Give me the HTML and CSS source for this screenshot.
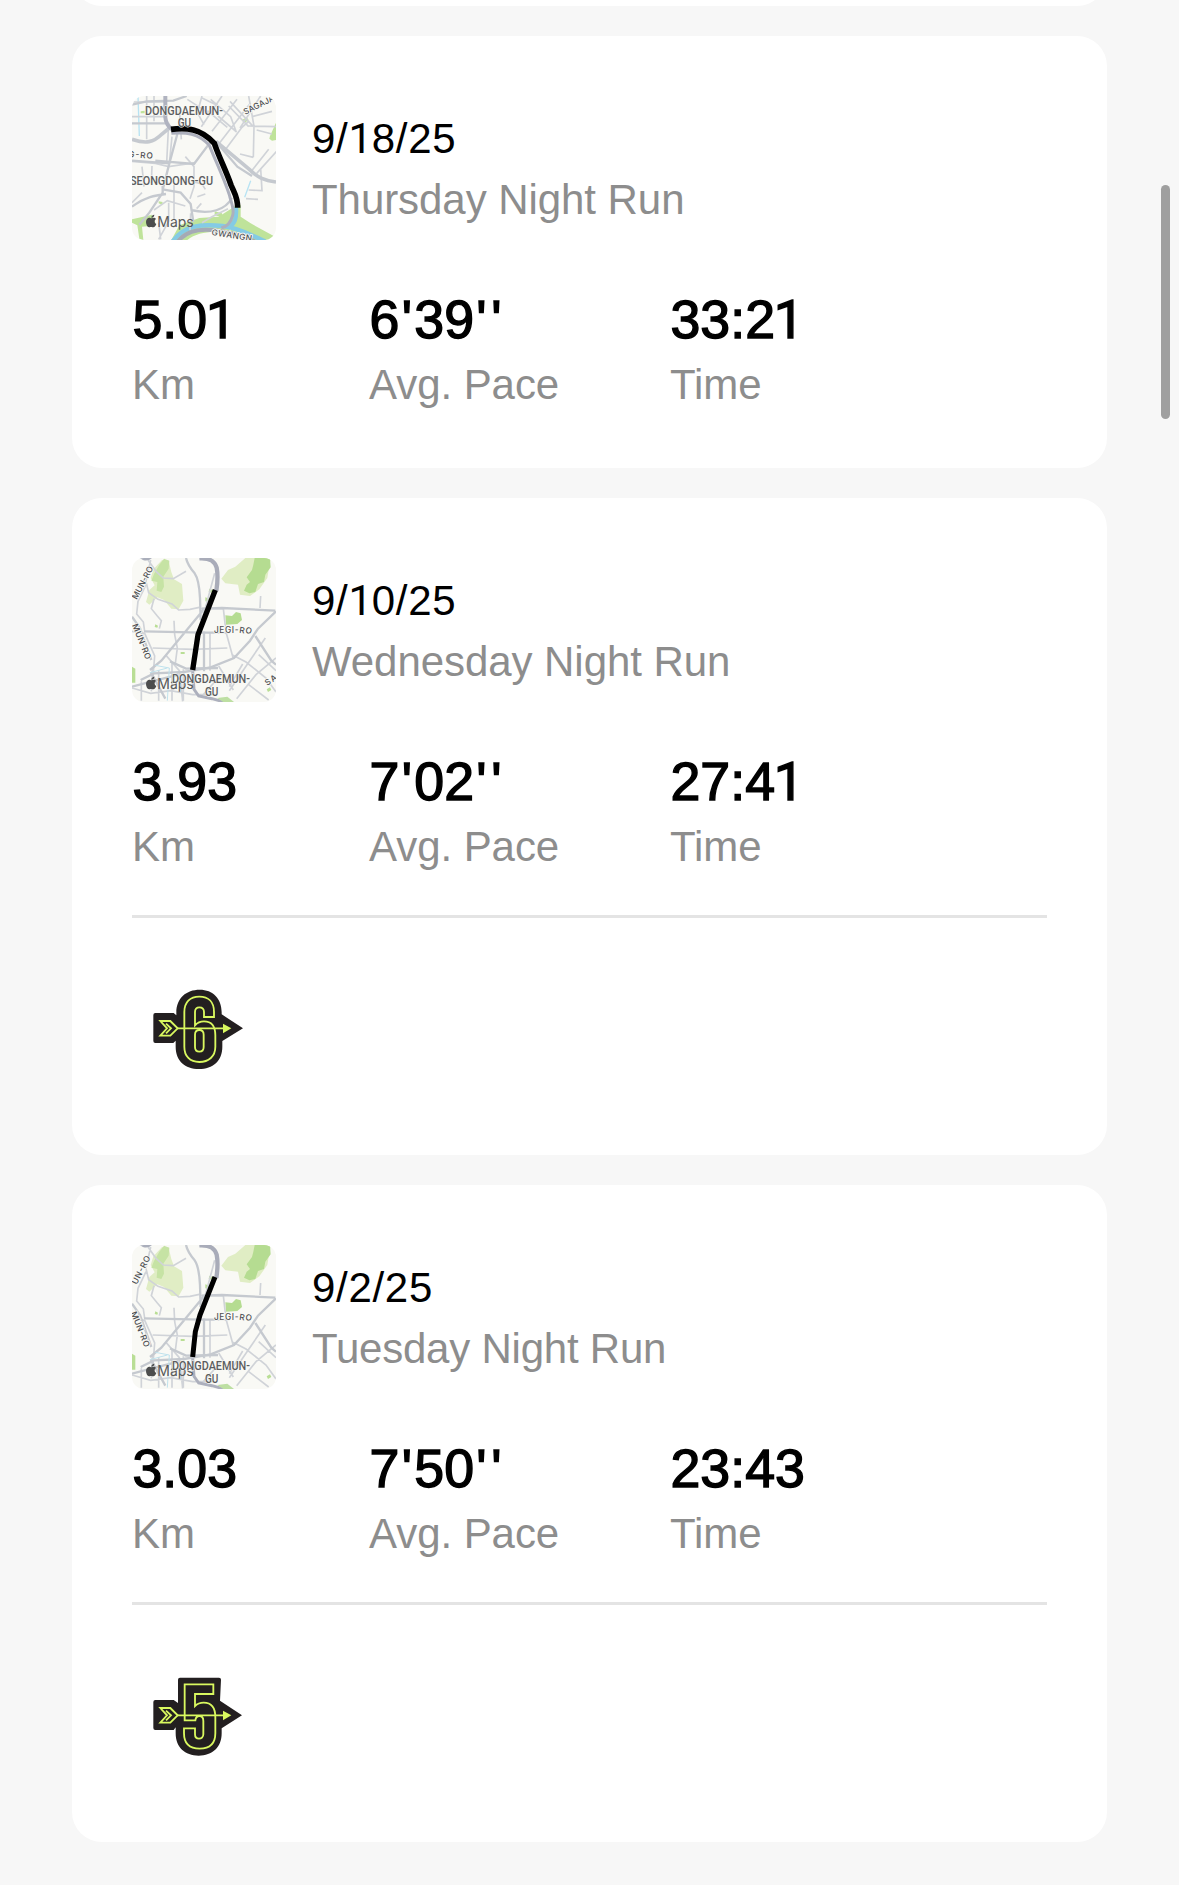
FILE: index.html
```html
<!DOCTYPE html>
<html lang="en">
<head>
<meta charset="utf-8">
<title>Activity history</title>
<link rel="stylesheet" href="styles.css">
</head>
<body>
<svg class="defs" aria-hidden="true">
  <defs>
    <g id="maps-mark">
      <path fill="#4c4d4d" d="M88 397c3-1 6-2 9-2 3 1 4 2 5 4-6 4-5 12 1 15-2 5-5 10-9 10-3 0-4-1-7-1s-4 1-6 1c-5-1-9-9-9-16 0-8 5-13 10-13 3 0 4 2 6 2zM88 395c0-5 4-9 9-9 0 5-4 9-9 9z"/>
      <text class="maps-word" x="106" y="423" textLength="109" lengthAdjust="spacingAndGlyphs">Maps</text>
    </g>
    <g id="north-base">
      <rect x="30" y="30" width="432" height="432" fill="#f9f9f5"/>
      <g fill="#e0edc4">
        <path d="M120 36l20 2 8 34 8 22 24 14 4 50-14 26-22-2-22-26-20-8-24 22-10-8 10-36 16-14-12-22 8-26z"/>
        <path d="M318 66l22-10 30-26h76l-10 60-24 34-28 20-30-4-6-30-38-4-12-14z"/>
      </g>
      <path fill="#c6e3a4" d="M112 50l14-18 16 6-2 24-16 24 2 30-8 16-14-4 2-26-18-4 8-20z"/>
      <path fill="#b5dc91" d="M398 30h46l2 28-16 22-4 22-18 6-8 24-18 4-16-8 8-18 10-8-10-14 16-22 4-16zM310 202l20 2 12-12 14 4 4 20-14 12-34 2z"/>
      <path fill="#b9de95" d="M262 122l10 4-4 8-8-2zM250 148l12 4-2 10-10-2zM100 229l8 4-2 6-8-2zM176 312h12v6h-12zM30 356l10 6v42H30zM434 424l10-6 4 8-10 6z"/>
      <g fill="none" stroke="#d0d3d8" stroke-width="5">
        <path d="M78 36l24 34 22 20 30 2 38-22M86 36L72 100l8 34 28 20 42 14 20 18 34-2 28-6M72 110L48 160l-4 38 20 24 4 28M96 152l-8 30 18 22 12 14-6 24M236 182h68l8 70 22 80M278 76l-24 90-12 40M156 218l2 42 8 40-6 46M92 300l120 4 104-4M92 358l-4 72M132 322l40 46 10 92M30 250l38 6 30 68-4 50M264 252v116M416 144l-2 36M330 320l42 22 60 48 30 42M430 270l-56 82-52 76M462 330l-60 50-58 72M290 354l44 72M362 348l-40 68M410 320l52 48M30 420l56 16 60-8 66 12 66 0M380 410l60 46M298 380l-58 64M58 400v58M110 366v92M150 344v114M184 364v94"/>
      </g>
      <g fill="none" stroke="#c5c9cf" stroke-width="7">
        <path d="M192 30c4 18 14 32 26 46 10 14 14 34 16 74l2 66M66 250l176 4h80M240 182l60-2 160 8M244 186L118 338l-34 28M246 250v120M462 190l-54 52-24 36-48 52-70 28-80 14-90 4-40 20M400 264l48 74 14 12M30 416l60-16 80-20M30 206l24 34 34 96"/>
        <path d="M86 372l44 80M144 340l48 22 96-2"/>
      </g>
      <path d="M232 31c34-2 46 10 52 28 4 20 2 50-1 70" fill="none" stroke="#a9acb9" stroke-width="13"/>
      <path d="M212 370l4 54 14 20 40 8 52 14" fill="none" stroke="#adb0bd" stroke-width="9"/>
      <path d="M30 30h60c-10 9-22 10-32 3z" fill="#aaaebb"/>
      <path d="M100 352l42 8-6 98M84 374l52-14" fill="none" stroke="#bfe2ed" stroke-width="3"/>
      <path d="M286 450l30-4 20 16h-32z" fill="#bddfa2"/>
    </g>
    <g id="north-labels">
      <text class="road" x="276" y="254" textLength="112" rotate="0 0 0 0 4 8 12">JEGI-RO</text>
      <text class="district" x="150" y="405" textLength="234" lengthAdjust="spacingAndGlyphs">DONGDAEMUN-</text>
      <text class="district" x="249" y="444" textLength="40" lengthAdjust="spacingAndGlyphs">GU</text>
    </g>
    <g id="arrow">
      <path class="neon" d="M111 160H252"/>
      <path d="M249 146l25 14-25 15z" fill="#d9f85f"/>
      <path class="neon" d="M61 138h30l22 22-22 22H61l20-22z"/>
      <path class="neon" d="M78 146l15 14-15 15"/>
    </g>
  </defs>
</svg>

<main class="feed">
  <article class="card card-previous"></article>

  <article class="card">
    <header class="run">
      <svg class="map" viewBox="30 30 432 432" role="img" aria-label="Route map">
        <rect x="30" y="30" width="432" height="432" fill="#f9f9f5"/>
        <path d="M30 400l60-14 10 24-14 10-26 2 4 40-12-4-6-40-16-8zM278 376l22 6 2 12-24-6zM444 150l18-40v52l-12 2-8-6zM360 102l14-8 6 8-14 10zM56 76l12-2v8H56zM110 346l12 2-2 8-10-4zM290 392l56-36 10 0v36l30 20 76 42v8H148l24-44 60-22z" fill="#bfe39a"/>
        <path d="M196 462c30-24 80-28 116-20 30 5 60 12 84 20z" fill="#f9f9f5"/>
        <path d="M342 364c2 36-4 48-20 58M152 466c36-50 90-52 150-46 50 6 90 30 128 46" fill="none" stroke="#84cbe5" stroke-width="13"/>
        <path d="M48 30l4 120M386 284l-18 50" fill="none" stroke="#b7e3f3" stroke-width="4"/>
        <g fill="none" stroke="#d0d3d8" stroke-width="5">
          <path d="M34 48h96M74 30v130M96 30v76M30 92h100M240 30l-14 50 20 36M196 40l62 40M266 40l60 52 16 44M300 30l-62 92M345 40l-75 96M288 90l56 48M256 74l60 50M320 60l60 62M386 50l-94 122M416 30l-62 96M324 46l70 76M240 36l50 24M390 92l60-16M380 120l82 2M380 30l16 90-2 94M394 214l-40-10M404 132l46 12M440 190l-52 66M464 196l-60 66M312 188l48-64 20-18M150 152l-8 80M30 226l70 6 40 10 80-12M60 242l6 60M90 240l-2 52M190 212l26 30v60l-12 36M156 296v106M226 332l24-8M210 286l30 8 10 16M140 350v56l-30 54M60 320l-30 30M96 372l40-28 54 16M110 410l6 50M206 382l-2 50M238 352l-14 16M240 410l30-18 48-24M380 312l40 2-4-66M372 338l36 2M140 110l-6 120M172 70l6 90"/>
        </g>
        <g fill="none" stroke="#c5c9cf" stroke-width="7">
          <path d="M30 56l44-10 80-2 40-14M30 112h100M166 144l-24 88-20 80M122 310l54 10 30 34 8 54M122 300v20l-40 60-30 36M30 362c40-30 70-34 102-38M264 170l-48 64-116-10M142 232l-112-8M206 372c60 14 104 0 124-36M286 172l60 70 44 28"/>
          <path d="M30 160c42 14 64 10 90-16l22-18M282 166l100 84c24 24 44 34 80 38" stroke-width="11"/>
        </g>
        <path d="M130 30v64c1 16 12 30 20 36" fill="none" stroke="#b0b3c0" stroke-width="12"/>
        <path d="M148 142c44-3 80-2 114 36 20 50 42 94 60 148 6 28 16 42 10 62-5 20-18 34-34 38" fill="none" stroke="#adb0bd" stroke-width="9"/>
        <path d="M168 466c24-30 60-38 102-34 54 6 84 14 128 34" fill="none" stroke="#a5a9b5" stroke-width="12"/>
        <path d="M147 130c45-6 90-3 130 42 16 46 35 82 50 125 11 26 20 36 20 68" fill="none" stroke="#000" stroke-width="17"/>
        <text class="district" x="69" y="86" textLength="234" lengthAdjust="spacingAndGlyphs">DONGDAEMUN-</text>
        <text class="district" x="167" y="123" textLength="40" lengthAdjust="spacingAndGlyphs">GU</text>
        <text class="district" x="24" y="297" textLength="249" lengthAdjust="spacingAndGlyphs">SEONGDONG-GU</text>
        <text class="road" x="18" y="214" textLength="74" transform="rotate(4 30 214)">G-RO</text>
        <text class="road" x="370" y="87" textLength="100" transform="rotate(-27 370 87)">SAGAJA</text>
        <text class="road" x="268" y="447" textLength="122" transform="rotate(9 268 447)">GWANGN</text>
        <use href="#maps-mark"/>
      </svg>
      <div class="run-title">
        <time class="date">9/<span class="one">1</span>8/25</time>
        <span class="name">Thursday Night Run</span>
      </div>
    </header>
    <dl class="stats">
      <div><dd>5.0<span class="one">1</span></dd><dt>Km</dt></div>
      <div><dd>6<span class="prime">'</span>39<span class="prime">'</span><span class="prime">'</span></dd><dt>Avg. Pace</dt></div>
      <div><dd>33:2<span class="one">1</span></dd><dt>Time</dt></div>
    </dl>
  </article>

  <article class="card card-tall">
    <header class="run">
      <svg class="map" viewBox="30 30 432 432" role="img" aria-label="Route map">
        <use href="#north-base"/>
        <path d="M280 126L228 260L212 366" fill="none" stroke="#000" stroke-width="16" stroke-linejoin="round"/>
        <text class="road" x="44" y="156" textLength="108" transform="rotate(-62 44 156)">MUN-RO</text>
        <text class="road" x="30" y="232" textLength="112" transform="rotate(68 30 232)">MUN-RO</text>
        <text class="road" x="436" y="414" textLength="60" transform="rotate(-35 436 414)">SAG</text>
        <use href="#maps-mark"/>
        <use href="#north-labels"/>
      </svg>
      <div class="run-title">
        <time class="date">9/<span class="one">1</span>0/25</time>
        <span class="name">Wednesday Night Run</span>
      </div>
    </header>
    <dl class="stats">
      <div><dd>3.93</dd><dt>Km</dt></div>
      <div><dd>7<span class="prime">'</span>02<span class="prime">'</span><span class="prime">'</span></dd><dt>Avg. Pace</dt></div>
      <div><dd>27:4<span class="one">1</span></dd><dt>Time</dt></div>
    </dl>
    <footer class="awards">
      <svg class="badge" viewBox="0 0 348 318" role="img" aria-label="6 runs">
        <path fill="#231f20" d="M46 114h55l8 7v-8c0-44 30-69 70-69s66 27 66 68v6l64 42-62 38v17c0 42-28 67-70 67s-70-25-70-67v-18l-7 7H46q-6 0-6-6v-78q0-6 6-6z"/>
        <path class="neon" d="M222 126v-15c0-29-16-46-44-46s-45 17-45 46v104c0 29 17 46 45 46s48-17 48-46v-34c0-27-12-42-34-42-13 0-21 5-27 12v-40c0-9 5-14 13-14s14 5 14 14v15zM178 165c8 0 13 5 13 14v37c0 9-5 14-13 14s-13-5-13-14v-37c0-9 5-14 13-14z"/>
        <use href="#arrow"/>
      </svg>
    </footer>
  </article>

  <article class="card card-tall">
    <header class="run">
      <svg class="map" viewBox="30 30 432 432" role="img" aria-label="Route map">
        <use href="#north-base"/>
        <path d="M279 126L234 240L220 290L212 366" fill="none" stroke="#000" stroke-width="15" stroke-linejoin="round"/>
        <text class="road" x="44" y="150" textLength="92" transform="rotate(-63 44 150)">UN-RO</text>
        <text class="road" x="26" y="234" textLength="112" transform="rotate(68 26 234)">MUN-RO</text>
        <use href="#maps-mark"/>
        <use href="#north-labels"/>
      </svg>
      <div class="run-title">
        <time class="date">9/2/25</time>
        <span class="name name-tight">Tuesday Night Run</span>
      </div>
    </header>
    <dl class="stats">
      <div><dd>3.03</dd><dt>Km</dt></div>
      <div><dd>7<span class="prime">'</span>50<span class="prime">'</span><span class="prime">'</span></dd><dt>Avg. Pace</dt></div>
      <div><dd>23:43</dd><dt>Time</dt></div>
    </dl>
    <footer class="awards">
      <svg class="badge" viewBox="0 0 348 318" role="img" aria-label="5 runs">
        <path fill="#231f20" d="M46 114h55l13 9V53q0-6 6-6h117q6 0 6 6l-3 63 66 44-61 39v15c0 42-28 67-69 67s-69-25-69-67v-18l-6 8H46q-6 0-6-6v-78q0-6 6-6z"/>
        <path class="neon" d="M134 67h86v29h-55v36c7-7 15-10 26-10 23 0 35 16 35 44v48c0 30-17 46-47 46s-47-16-47-46v-15h33v18c0 8 5 13 12 13s13-5 13-13v-40c0-10-4-15-12-15-7 0-11 4-12 13h-32z"/>
        <use href="#arrow"/>
      </svg>
    </footer>
  </article>
</main>
<div class="scroll-thumb"></div>
</body>
</html>
```

FILE: styles.css
```css
* {
  box-sizing: border-box;
}

body {
  margin: 0;
  height: 1885px;
  overflow: hidden;
  background: #f7f7f7;
  color: #000;
  font-family: "Liberation Sans", Arial, sans-serif;
}

.defs {
  display: block;
  width: 0;
  height: 0;
}

.feed {
  display: flex;
  flex-direction: column;
  gap: 30px;
  padding: 0 72px;
}

.card {
  flex: none;
  height: 432px;
  padding: 60px;
  border-radius: 30px;
  background: #fff;
}

.card-tall {
  height: 657px;
}

.card-previous {
  height: 60px;
  margin-top: -54px;
  padding: 0;
}

.run {
  display: flex;
  align-items: center;
  gap: 36px;
  height: 144px;
}

.map {
  flex: none;
  width: 144px;
  height: 144px;
  border-radius: 12px;
}

.run-title {
  display: flex;
  flex-direction: column;
  padding-top: 2px;
  font-size: 42px;
  line-height: 61px;
}

.date {
  font-kerning: none;
  letter-spacing: 0.7px;
}

.name {
  color: #8d8d8d;
  letter-spacing: -0.06px;
}

.name-tight {
  letter-spacing: -0.22px;
}

.one,
.prime {
  display: inline-block;
  width: 0.556em;
  line-height: 1;
  text-align: center;
}

.one {
  font-family: Roboto, sans-serif;
}

.prime {
  width: 0.278em;
}

.stats {
  display: grid;
  grid-template-columns: 237px 301px 1fr;
  margin: 49px 0 0;
}

.stats div {
  display: flex;
  flex-direction: column;
  gap: 6px;
}

.stats dd {
  margin: 0;
  padding-left: 0.5px;
  font-size: 53.7px;
  font-kerning: none;
  line-height: 60px;
  -webkit-text-stroke: 1.4px #000;
}

.stats .one {
  text-indent: -2px;
}

.stats dt {
  color: #8d8d8d;
  font-size: 42px;
  line-height: 60px;
  letter-spacing: -0.06px;
}

.awards {
  margin-top: 38px;
  padding: 57px 8px 0;
  border-top: 3px solid #e4e4e4;
}

.badge {
  display: block;
  width: 116px;
  height: 106px;
}

.neon {
  fill: none;
  stroke: #d9f85f;
  stroke-width: 5.5px;
}

.district {
  fill: #5c5d5f;
  font: 500 37px Roboto, sans-serif;
  paint-order: stroke;
  stroke: #f9f9f5;
  stroke-width: 3px;
}

.road {
  fill: #4e4f52;
  font: 500 25px Inter, sans-serif;
  paint-order: stroke;
  stroke: #f9f9f5;
  stroke-width: 5px;
}

.maps-word {
  fill: #58595a;
  font: 400 43px Inter, sans-serif;
}

.scroll-thumb {
  position: absolute;
  top: 185px;
  left: 1161px;
  width: 9px;
  height: 234px;
  border-radius: 5px;
  background: #9f9f9f;
}
```
